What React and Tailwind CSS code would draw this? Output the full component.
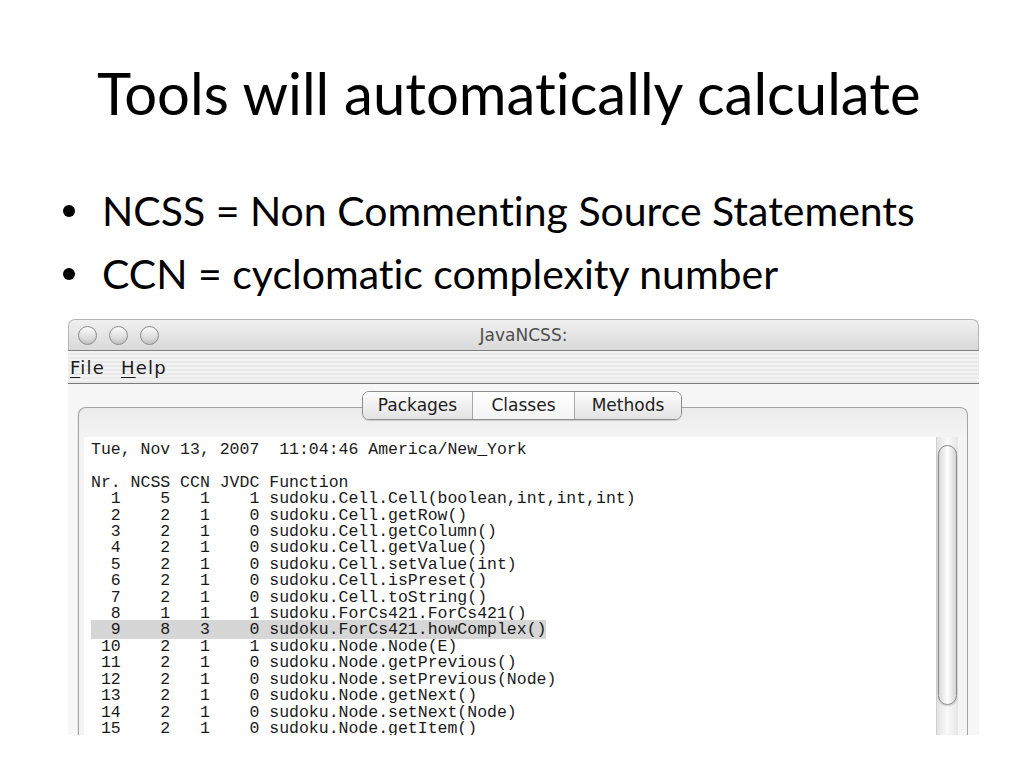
// App.jsx - slide: JavaNCSS metrics screenshot
const rows = [
  [1, 5, 1, 1, 'sudoku.Cell.Cell(boolean,int,int,int)'],
  [2, 2, 1, 0, 'sudoku.Cell.getRow()'],
  [3, 2, 1, 0, 'sudoku.Cell.getColumn()'],
  [4, 2, 1, 0, 'sudoku.Cell.getValue()'],
  [5, 2, 1, 0, 'sudoku.Cell.setValue(int)'],
  [6, 2, 1, 0, 'sudoku.Cell.isPreset()'],
  [7, 2, 1, 0, 'sudoku.Cell.toString()'],
  [8, 1, 1, 1, 'sudoku.ForCs421.ForCs421()'],
  [9, 8, 3, 0, 'sudoku.ForCs421.howComplex()'],
  [10, 2, 1, 1, 'sudoku.Node.Node(E)'],
  [11, 2, 1, 0, 'sudoku.Node.getPrevious()'],
  [12, 2, 1, 0, 'sudoku.Node.setPrevious(Node)'],
  [13, 2, 1, 0, 'sudoku.Node.getNext()'],
  [14, 2, 1, 0, 'sudoku.Node.setNext(Node)'],
  [15, 2, 1, 0, 'sudoku.Node.getItem()'],
]

const fmt = (r) =>
  String(r[0]).padStart(3) + ' ' + String(r[1]).padStart(4) + ' ' +
  String(r[2]).padStart(3) + ' ' + String(r[3]).padStart(4) + ' ' + r[4]

function Light() {
  return (
    <div className="w-[19px] h-[19px] rounded-full border border-[#8c8c8c] bg-gradient-to-b from-[#fbfbfb] to-[#cdcdcd] shadow-[inset_0_-2px_3px_rgba(0,0,0,0.08)]" />
  )
}

function Bullet({ children }) {
  return (
    <li className="flex items-center h-[63px]">
      <span className="ml-[63px] w-[12px] h-[12px] rounded-full bg-black" />
      <span className="ml-[27px]">{children}</span>
    </li>
  )
}

export default function App() {
  const ui = "font-['DejaVu_Sans','Liberation_Sans',sans-serif]"
  return (
    <div className="w-[1024px] h-[768px] bg-white overflow-hidden flex flex-col font-['Lato','Noto_Sans',sans-serif] text-black [font-variant-ligatures:none]">
      {/* Title */}
      <h1 className="pl-[97px] pt-[64px] text-[58px] leading-[58px] font-normal">
        Tools will automatically calculate
      </h1>

      {/* Bullets */}
      <ul className="mt-[57px] text-[41px] leading-[63px]">
        <Bullet>NCSS = Non Commenting Source Statements</Bullet>
        <Bullet>CCN = cyclomatic complexity number</Bullet>
      </ul>

      {/* JavaNCSS window */}
      <div className={`mt-[14px] ml-[68px] w-[911px] h-[416px] overflow-hidden flex flex-col ${ui}`}>
        {/* title bar */}
        <div className="h-[31px] shrink-0 rounded-t-[7px] border border-b-0 border-[#b4b4b4] bg-gradient-to-b from-[#f0f0f0] to-[#d9d9d9] flex items-center relative">
          <div className="flex gap-[12px] ml-[9px]">
            <Light />
            <Light />
            <Light />
          </div>
          <div className="absolute inset-0 flex items-center justify-center text-[17px] text-[#4d4d4d] pt-[2px]">
            JavaNCSS:
          </div>
        </div>
        <div className="h-px bg-[#7f7f7f] shrink-0" />

        {/* menu bar */}
        <div className="h-[32px] shrink-0 flex items-center gap-[16px] pl-[2px] text-[18px] tracking-[1.2px] text-[#1c1c1c] bg-[repeating-linear-gradient(180deg,#f3f3f3_0px,#f3f3f3_2px,#e9e9e9_2px,#e9e9e9_4px)]">
          <span><span className="underline underline-offset-[3px]">F</span>ile</span>
          <span><span className="underline underline-offset-[3px]">H</span>elp</span>
        </div>
        <div className="h-px bg-[#7a7a7a] shrink-0" />

        {/* body */}
        <div className="flex-1 bg-[#f7f7f7] flex flex-col pt-[7px] min-h-0">
          {/* tabs */}
          <div className="relative z-10 flex justify-center pr-[3px] text-[17px] text-[#1e1e1e]">
            <div className="flex h-[29px] rounded-[7px] border border-[#8e8e8e] overflow-hidden shadow-[0_1px_1px_rgba(0,0,0,0.15)]">
              <div className="w-[110px] flex items-center justify-center bg-gradient-to-b from-[#fdfdfd] to-[#e3e3e3] border-r border-[#a8a8a8]">Packages</div>
              <div className="w-[102px] flex items-center justify-center bg-gradient-to-b from-[#ffffff] to-[#f4f4f4] border-r border-[#a8a8a8]">Classes</div>
              <div className="w-[106px] flex items-center justify-center bg-gradient-to-b from-[#fdfdfd] to-[#e3e3e3]">Methods</div>
            </div>
          </div>

          {/* tab panel */}
          <div className="-mt-[13px] ml-[10px] mr-[11px] flex-1 rounded-t-[8px] border border-b-0 border-[#a3a3a3] bg-gradient-to-b from-[#ececec] to-[#f4f4f4] to-[30px] pt-[29px] pl-[5px] pr-[9px] flex min-h-0 shadow-[-1px_0_1px_rgba(0,0,0,0.06)]">
            <div className="flex-1 bg-white flex min-h-0">
              <pre className="flex-1 pl-[7px] pt-[5px] font-['Liberation_Mono','Courier_New',monospace] text-[16.5px] leading-[16.4px] text-[#1a1a1a]">
{`Tue, Nov 13, 2007  11:04:46 America/New_York

Nr. NCSS CCN JVDC Function
`}
                {rows.map((r) => (
                  <div key={r[0]}>
                    <span className={r[0] === 9 ? 'bg-[#d6d6d6]' : ''}>{fmt(r)}</span>
                  </div>
                ))}
              </pre>

              {/* scrollbar */}
              <div className="w-[22px] shrink-0 bg-gradient-to-r from-[#e2e2e2] via-[#fafafa] to-[#e6e6e6] border-l border-[#cfcfcf] pt-[8px] px-[1px]">
                <div className="h-[260px] rounded-full border-[1.5px] border-[#8a8a8a] bg-gradient-to-r from-[#d8d8d8] via-[#ffffff] to-[#d4d4d4] shadow-[0_1px_2px_rgba(0,0,0,0.2)]" />
              </div>
            </div>
          </div>
        </div>
      </div>
    </div>
  )
}
